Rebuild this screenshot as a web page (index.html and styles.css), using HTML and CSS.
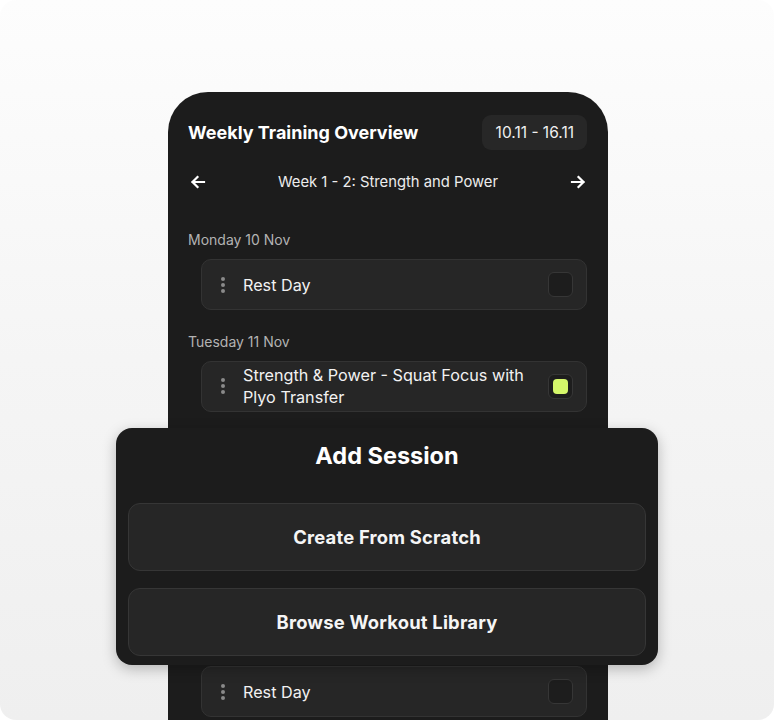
FILE: index.html
```html
<!DOCTYPE html>
<html>
<head>
<meta charset="utf-8">
<link rel="stylesheet" href="styles.css">
</head>
<body>
<div class="canvas">
  <div class="phone">
    <div class="header">
      <h1 class="title">Weekly Training Overview</h1>
      <div class="pill">10.11 - 16.11</div>
    </div>
    <div class="nav">
      <svg class="arrow" width="16" height="16" viewBox="0 0 16 16"><path d="M14 8H2.5M7.5 3L2.5 8l5 5" fill="none" stroke="#fff" stroke-width="2.2" stroke-linecap="square"/></svg>
      <span class="week">Week 1 - 2: Strength and Power</span>
      <svg class="arrow" width="16" height="16" viewBox="0 0 16 16"><path d="M2 8h11.5M8.5 3l5 5-5 5" fill="none" stroke="#fff" stroke-width="2.2" stroke-linecap="square"/></svg>
    </div>
    <div class="days">
      <div class="day">
        <div class="label">Monday 10 Nov</div>
        <div class="card"><span class="dots"><i></i><i></i><i></i></span><span class="name">Rest Day</span><span class="check"></span></div>
      </div>
      <div class="day">
        <div class="label">Tuesday 11 Nov</div>
        <div class="card"><span class="dots"><i></i><i></i><i></i></span><span class="name">Strength &amp; Power - Squat Focus with Plyo Transfer</span><span class="check on"><b></b></span></div>
      </div>
      <div class="day">
        <div class="label">Wednesday 12 Nov</div>
        <div class="card"><span class="dots"><i></i><i></i><i></i></span><span class="name">Rest Day</span><span class="check"></span></div>
      </div>
      <div class="day">
        <div class="label">Thursday 13 Nov</div>
        <div class="card"><span class="dots"><i></i><i></i><i></i></span><span class="name">Rest Day</span><span class="check"></span></div>
      </div>
      <div class="day">
        <div class="label">Friday 14 Nov</div>
        <div class="card"><span class="dots"><i></i><i></i><i></i></span><span class="name">Rest Day</span><span class="check"></span></div>
      </div>
    </div>
  </div>
  <div class="modal">
    <h2 class="modal-title">Add Session</h2>
    <button class="option">Create From Scratch</button>
    <button class="option">Browse Workout Library</button>
  </div>
</div>
</body>
</html>
```
FILE: styles.css
```css
* { box-sizing: border-box; }
html, body { margin: 0; padding: 0; background: #ffffff; }
body { font-family: "Inter", "Roboto", sans-serif; }
.canvas {
  position: relative;
  width: 774px;
  height: 720px;
  border-radius: 16px;
  overflow: hidden;
  background: linear-gradient(180deg, #fdfdfd 0%, #f5f5f5 50%, #efefef 100%);
  display: flex;
  justify-content: center;
  padding-top: 92px;
  padding-left: 2px;
}
.phone {
  width: 440px;
  height: 660px;
  background: #1c1c1c;
  border-radius: 40px 40px 0 0;
  padding: 23px 21px 0 20px;
  color: #fff;
  flex-shrink: 0;
}
.header {
  display: flex;
  justify-content: space-between;
  align-items: center;
}
.title {
  margin: 0;
  font-size: 18px;
  font-weight: 700;
  letter-spacing: 0;
  color: #fff;
}
.pill {
  height: 35px;
  padding: 0 13px 0 14px;
  border-radius: 9px;
  background: #272727;
  display: flex;
  align-items: center;
  font-size: 15.5px;
  font-weight: 400;
  color: #f0f0f0;
}
.nav {
  margin-top: 20px;
  height: 24px;
  display: flex;
  align-items: center;
  justify-content: space-between;
  padding: 0 1px 0 2px;
}
.week {
  font-size: 14.8px;
  font-weight: 400;
  color: #ececec;
}
.days {
  margin-top: 36px;
  display: flex;
  flex-direction: column;
  gap: 21.75px;
}
.day {
  display: flex;
  flex-direction: column;
  gap: 9px;
}
.label {
  height: 20px;
  line-height: 20px;
  font-size: 14px;
  color: #b3b3b3;
}
.card {
  margin-left: 13px;
  min-height: 51px;
  padding: 2px 13px 2px 17px;
  border-radius: 10px;
  background: #262626;
  border: 1px solid #333;
  display: flex;
  align-items: center;
}
.dots {
  width: 8px;
  display: flex;
  flex-direction: column;
  align-items: center;
  gap: 2px;
  margin-right: 16px;
}
.dots i {
  width: 4px;
  height: 4px;
  border-radius: 50%;
  background: #8a8a8a;
}
.name {
  flex: 1;
  font-size: 16.2px;
  line-height: 22px;
  color: #f2f2f2;
  padding-right: 20px;
}
.check {
  width: 25px;
  height: 25px;
  border-radius: 6px;
  background: #1d1d1d;
  border: 1px solid #363636;
  display: flex;
  align-items: center;
  justify-content: center;
  flex-shrink: 0;
}
.check b {
  width: 15px;
  height: 15px;
  border-radius: 4px;
  background: #d5f76a;
}
.modal {
  position: absolute;
  left: 116px;
  top: 428px;
  width: 542px;
  height: 237px;
  background: #1c1c1c;
  border-radius: 16px;
  padding: 14px 12px 9px 12px;
  box-shadow: 0 4px 14px rgba(0,0,0,0.25);
  display: flex;
  flex-direction: column;
}
.modal-title {
  margin: 0 0 33px 0;
  height: 28px;
  line-height: 28px;
  text-align: center;
  font-size: 23.5px;
  font-weight: 700;
  color: #fff;
}
.option {
  height: 68px;
  border-radius: 12px;
  background: #262626;
  border: 1px solid #363636;
  color: #f5f5f5;
  font-family: "Inter", sans-serif;
  font-size: 18.4px;
  font-weight: 700;
  letter-spacing: 0.2px;
}
.option + .option { margin-top: 17px; }
```
